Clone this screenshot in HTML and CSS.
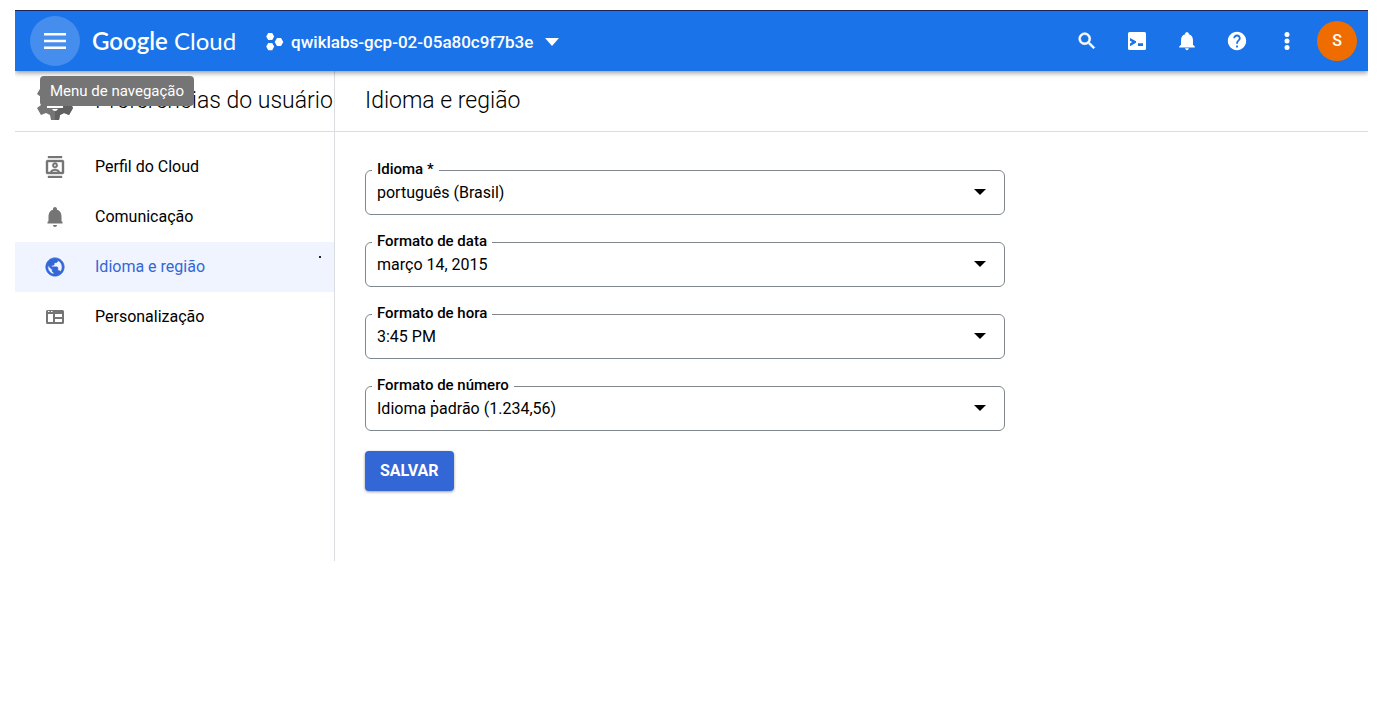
FILE: index.html
```html
<!DOCTYPE html>
<html lang="pt-BR">
<head>
<meta charset="utf-8">
<title>Idioma e região – Google Cloud</title>
<link rel="stylesheet" href="styles.css">
</head>
<body>
<div class="app">
  <header class="topbar">
    <div class="menu-wrap">
      <button class="menu-btn" aria-label="Abrir menu" aria-describedby="menu-tip">
        <svg width="24" height="24" viewBox="0 0 24 24"><path d="M1 4h22v2.600H1zM1 10.700h22v2.600H1zM1 17.400h22V20H1z"/></svg>
      </button>
      <div class="tooltip" id="menu-tip" role="tooltip">Menu de navegação</div>
    </div>
    <a class="logo" href="#"><span class="logo-strong">Google</span> <span>Cloud</span></a>
    <button class="project">
      <svg class="project-icon" width="20" height="20" viewBox="0 0 20 20"><path d="M3.200 1h4l2 3.500-2 3.500h-4l-2-3.500zM12 6h4l2.300 4-2.300 4h-4l-2.300-4zM3.200 11h4l2 3.600-2 3.600h-4l-2-3.600z"/></svg>
      <span>qwiklabs-gcp-02-05a80c9f7b3e</span>
      <svg class="project-caret" width="14" height="8" viewBox="0 0 14 8"><path d="M0 0h14L7 8z"/></svg>
    </button>
    <div class="actions">
      <button class="action" aria-label="Pesquisar"><svg width="22" height="22" viewBox="0 0 24 24"><path d="M15.500 14h-.790l-.280-.270A6.470 6.470 0 0 0 16 9.500 6.500 6.500 0 1 0 9.500 16c1.610 0 3.090-.590 4.230-1.570l.270.280v.790l5 4.990L20.490 19zm-6 0C7.010 14 5 11.990 5 9.500S7.010 5 9.500 5 14 7.010 14 9.500 11.990 14 9.500 14z" stroke="#fff" stroke-width=".7"/></svg></button>
      <button class="action" aria-label="Cloud Shell"><svg width="18" height="18" viewBox="0 0 18 18"><path fill-rule="evenodd" d="M1.500 0h15Q18 0 18 1.500v15q0 1.500-1.500 1.500h-15Q0 18 0 16.500v-15Q0 0 1.500 0zM2 6v2.800L4.200 10 2 11.400v2.800L8 10.700V9.300zM10 11.300V14h5v-2.700z"/></svg></button>
      <button class="action" aria-label="Notificações"><svg width="22" height="22" viewBox="0 0 24 24"><path d="M12 22c1.100 0 2-.9 2-2h-4c0 1.100.9 2 2 2zm6.500-6v-5c0-3.070-1.640-5.640-4.500-6.320V4c0-.83-.67-1.500-2-1.500S10 3.170 10 4v.68C7.130 5.360 5.500 7.920 5.500 11v5l-2 2v1h17v-1z"/></svg></button>
      <button class="action" aria-label="Ajuda"><svg width="22" height="22" viewBox="0 0 24 24"><path d="M12 2C6.480 2 2 6.480 2 12s4.480 10 10 10 10-4.480 10-10S17.520 2 12 2zm1 17h-2v-2h2v2zm2.070-7.750-.9.920C13.450 12.900 13 13.500 13 15h-2v-.5c0-1.100.45-2.100 1.170-2.830l1.240-1.260c.37-.36.59-.86.59-1.410 0-1.100-.9-2-2-2s-2 .9-2 2H8c0-2.210 1.790-4 4-4s4 1.790 4 4c0 .88-.36 1.680-.93 2.250z"/></svg></button>
      <button class="action" aria-label="Mais opções"><svg width="6" height="18" viewBox="0 0 6 18"><circle cx="3" cy="2.500" r="2.500"/><circle cx="3" cy="9" r="2.500"/><circle cx="3" cy="15.500" r="2.500"/></svg></button>
      <button class="avatar" aria-label="Conta">S</button>
    </div>
  </header>
  <div class="body">
    <aside class="sidebar">
      <div class="side-head">
        <svg class="gear" width="40" height="40" viewBox="0 0 40 40"><path fill="#757575" d="M16 1h8l1 5 4 2 5-2 4 7-4 3v8l4 3-4 7-5-2-4 2-1 5h-8l-1-5-4-2-5 2-4-7 4-3v-8l-4-3 4-7 5 2 4-2z"/><path fill="#616161" d="M20 29 36 22l2 5-4 7-5-2-4 2-1 5h-4z"/><path fill="#fff" d="M12 25h16v2H12zM17 28h6q-1 2-3 2t-3-2z"/></svg>
        <h2 class="title">Preferências do usuário</h2>
      </div>
      <nav class="nav">
        <a class="nav-item" href="#"><svg width="20" height="22" viewBox="0 0 20 22"><path fill-rule="evenodd" d="M3 0h14v2H3zM3 20h14v2H3zM2.500 4h15Q19 4 19 5.500v11q0 1.500-1.500 1.500h-15Q1 18 1 16.500v-11Q1 4 2.500 4zM3 6v10h2q1-3 5-3t5 3h2V6zM7 16h6q-1-1.300-3-1.300T7 16zM10 6.500a2.800 2.800 0 1 0 .01 0zM10 8.200a1.100 1.100 0 1 1-.01 0z" stroke="currentColor" stroke-width=".4"/></svg>Perfil do Cloud</a>
        <a class="nav-item" href="#"><svg width="20" height="20" viewBox="2 2 20 20"><path d="M12 22c1.100 0 2-.9 2-2h-4c0 1.100.9 2 2 2zm6.500-6v-5c0-3.070-1.640-5.640-4.500-6.320V4c0-.83-.67-2-2-2s-2 1.170-2 2v.68C7.130 5.360 5.500 7.920 5.500 11v5l-1 1v1.500h15V17z"/></svg>Comunicação</a>
        <a class="nav-item active" href="#" aria-current="page"><svg width="20" height="20" viewBox="1 1 22 22"><path d="M12 2C6.480 2 2 6.480 2 12s4.480 10 10 10 10-4.480 10-10S17.520 2 12 2zm-1 17.930c-3.950-.49-7-3.850-7-7.930 0-.62.080-1.210.210-1.790L9 15v1c0 1.100.9 2 2 2v1.930zm6.900-2.540c-.26-.81-1-1.390-1.900-1.390h-1v-3c0-.55-.45-1-1-1H8v-2h2c.55 0 1-.45 1-1V7h2c1.100 0 2-.9 2-2v-.41c2.930 1.190 5 4.060 5 7.410 0 2.080-.8 3.970-2.100 5.390z" stroke="currentColor" stroke-width="1"/></svg>Idioma e região<span class="speck"></span></a>
        <a class="nav-item" href="#"><svg width="20" height="16" viewBox="0 0 20 16"><path fill-rule="evenodd" d="M2.500 1h15Q19 1 19 2.500v11q0 1.500-1.500 1.500h-15Q1 15 1 13.500v-11Q1 1 2.500 1zM3 2v1h1.500V2zM6 2v1h1.500V2zM3 5v8h5V5zM10 5v3h7V5zM10 10v3h7v-3z"/></svg>Personalização</a>
      </nav>
    </aside>
    <main class="main">
      <div class="main-head"><h1 class="title">Idioma e região</h1></div>
      <form class="form">
        <div class="field">
          <label for="lang">Idioma *</label>
          <select id="lang"><option>português (Brasil)</option></select>
          <svg class="caret" width="12" height="6" viewBox="0 0 12 6"><path d="M0 0h12L6 6z"/></svg>
        </div>
        <div class="field">
          <label for="date">Formato de data</label>
          <select id="date"><option>março 14, 2015</option></select>
          <svg class="caret" width="12" height="6" viewBox="0 0 12 6"><path d="M0 0h12L6 6z"/></svg>
        </div>
        <div class="field">
          <label for="time">Formato de hora</label>
          <select id="time"><option>3:45 PM</option></select>
          <svg class="caret" width="12" height="6" viewBox="0 0 12 6"><path d="M0 0h12L6 6z"/></svg>
        </div>
        <div class="field">
          <label for="number">Formato de número</label>
          <select id="number"><option>Idioma padrão (1.234,56)</option></select>
          <span class="speck speck-field"></span>
          <svg class="caret" width="12" height="6" viewBox="0 0 12 6"><path d="M0 0h12L6 6z"/></svg>
        </div>
        <button class="save" type="button">SALVAR</button>
      </form>
    </main>
  </div>
</div>
</body>
</html>
```
FILE: styles.css
```css
* { box-sizing: border-box; }
body { margin: 0; background: #fff; color: #000; font: 16px/20px Roboto, sans-serif; }
button { border: 0; padding: 0; background: none; font: inherit; color: inherit; cursor: pointer; }
a { color: inherit; text-decoration: none; }
svg { display: block; flex: none; fill: currentColor; }

.app { padding: 10px 16px 0 15px; }

.topbar {
  position: relative;
  z-index: 1;
  display: flex;
  align-items: center;
  height: 61px;
  padding: 0 11px 0 15px;
  border-top: 1px solid #1f2457;
  background: #1a73e8;
  color: #fff;
  box-shadow: 0 2px 5px rgba(0, 0, 0, .4);
  clip-path: inset(0 0 -60px 0);
}
.menu-wrap { position: relative; }
.menu-btn {
  display: flex;
  align-items: center;
  justify-content: center;
  width: 50px;
  height: 50px;
  border-radius: 50%;
  background: #468eed;
}
.tooltip {
  position: absolute;
  top: 60px;
  left: 10px;
  padding: 5px 10px;
  border-radius: 4px;
  background: #757575;
  font-size: 15px;
  white-space: nowrap;
}
.logo { margin-left: 12px; font: 24px/30px Lato, sans-serif; white-space: nowrap; }
.logo-strong { font-weight: 600; }
.project { display: flex; align-items: center; margin-left: 29px; padding-top: 2px; font-size: 17px; font-weight: 500; white-space: nowrap; }
.project-icon { margin-right: 6px; }
.project-caret { margin-left: 12px; }
.actions { display: flex; align-items: center; margin-left: auto; }
.action { display: flex; align-items: center; justify-content: center; width: 50px; height: 50px; }
.avatar { width: 40px; height: 40px; margin-left: 5px; border-radius: 50%; background: #ef6c00; font-weight: 500; }

.body { display: flex; }
.sidebar { flex: none; width: 320px; min-height: 490px; border-right: 1px solid #dadce0; }
.side-head, .main-head { display: flex; align-items: center; height: 61px; border-bottom: 1px solid #dadce0; }
.side-head { padding-left: 20px; }
.gear { margin-right: 20px; }
.title { margin: 0; font-size: 23px; font-weight: 300; line-height: 28px; white-space: nowrap; }
.nav { padding-top: 10px; }
.nav-item { position: relative; display: flex; align-items: center; gap: 30px; height: 50px; padding-left: 30px; }
.nav-item svg { color: #757575; }
.nav-item.active { background: #f0f4ff; color: #3367d6; }
.nav-item.active svg { color: #3367d6; }
.speck { position: absolute; top: 14px; right: 13px; width: 2px; height: 2px; background: #202124; }
.speck-field { top: 14px; right: auto; left: 68px; }

.main { flex: 1; }
.main-head { padding-left: 30px; }
.form { max-width: 670px; padding: 38px 0 0 30px; }
.field { position: relative; margin-bottom: 27px; }
.field label {
  position: absolute;
  top: -11px;
  left: 7px;
  padding: 0 5px;
  background: #fff;
  font-size: 15px;
  font-weight: 500;
}
.field select {
  display: block;
  width: 100%;
  height: 45px;
  padding: 0 40px 0 11px;
  border: 1px solid #80868b;
  border-radius: 6px;
  background: #fff;
  color: inherit;
  font: inherit;
  appearance: none;
}
.caret { position: absolute; top: 19px; right: 19px; pointer-events: none; }
.save {
  height: 40px;
  margin-top: -7px;
  padding: 0 15px;
  border-radius: 4px;
  background: #3367d6;
  color: #fff;
  font-weight: 700;
  box-shadow: 0 1px 3px rgba(0, 0, 0, .4);
}
```
